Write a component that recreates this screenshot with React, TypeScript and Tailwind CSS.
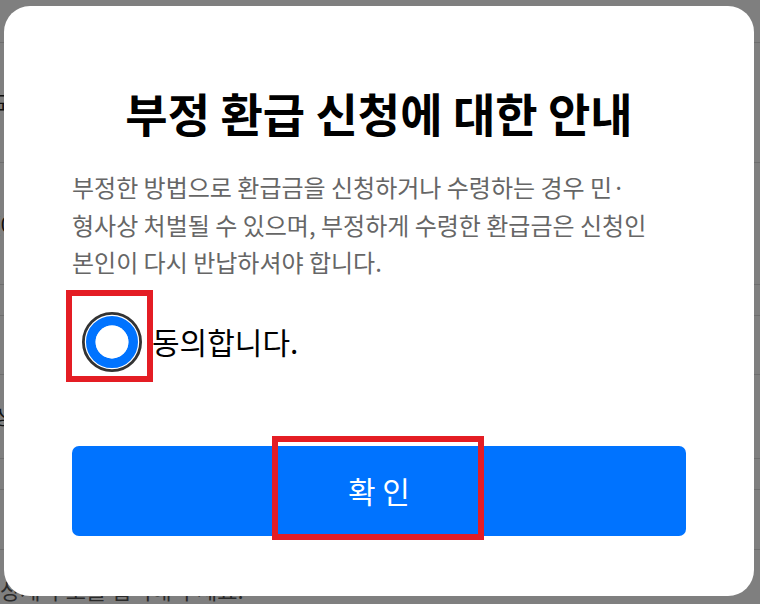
import React from 'react'

const ROWS: { h: string; text?: string }[] = [
  { h: 'h-[43px]' },
  { h: 'h-[120px]', text: '도로명 주소' },
  { h: 'h-[122px]', text: '(0' },
  { h: 'h-[31px]' },
  { h: 'h-[59px]' },
  { h: 'h-[84px]', text: '상세' },
  { h: 'h-[31px]' },
  { h: 'h-[60px]' },
]

const Radio = () => (
  <svg width="60" height="60" viewBox="0 0 60 60">
    <circle cx="30" cy="30" r="28.6" fill="#fff" stroke="#333" strokeWidth="2.8" />
    <circle cx="30" cy="30" r="21.2" fill="none" stroke="#0073ff" strokeWidth="9.6" />
    <circle cx="30" cy="30" r="16.4" fill="#fff" />
  </svg>
)

export default function App() {
  return (
    <div className="relative w-[760px] h-[604px] overflow-hidden bg-white font-['Noto_Sans_CJK_KR',sans-serif]">
      {/* page behind the dialog */}
      <div className="flex flex-col">
        {ROWS.map((r, i) => (
          <div key={i} className={`${r.h} border-b border-[#dddddd] flex items-center text-[20px] text-[#222] -ml-[6px]`}>
            {r.text}
          </div>
        ))}
        <div className="pt-[24px] text-[22px] text-[#555] leading-[30px]">상세 주소를 입력해 주세요.</div>
      </div>

      {/* dim overlay + dialog */}
      <div className="absolute inset-0 bg-black/50 pt-[6px] pl-[4px]">
        <div className="w-[750px] h-[590px] bg-white rounded-[26px] flex flex-col px-[68px] pt-[79px]">
          <h1 className="text-[46px] leading-[55px] font-bold text-center text-black">부정 환급 신청에 대한 안내</h1>

          <p className="mt-[28px] text-[24px] leading-[37.5px] text-[#666]">
            부정한 방법으로 환급금을 신청하거나 수령하는 경우 민·
            <br />
            형사상 처벌될 수 있으며, 부정하게 수령한 환급금은 신청인
            <br />
            본인이 다시 반납하셔야 합니다.
          </p>

          <label className="mt-[31px] flex items-center h-[60px]">
            <span className="relative ml-[10px] w-[60px] h-[60px]">
              <Radio />
              <span className="absolute -left-[16px] -top-[22px] w-[87px] h-[92px] border-[6px] border-[#e41d24]" />
            </span>
            <span className="ml-[10px] text-[30px] text-black">동의합니다.</span>
          </label>

          <button className="relative mt-[74px] h-[90px] w-full rounded-[7px] bg-[#0073ff] text-white text-[30px]">
            확 인
            <span className="absolute left-[200px] -top-[10px] w-[212px] h-[104px] border-[6px] border-[#e41d24]" />
          </button>
        </div>
      </div>
    </div>
  )
}
